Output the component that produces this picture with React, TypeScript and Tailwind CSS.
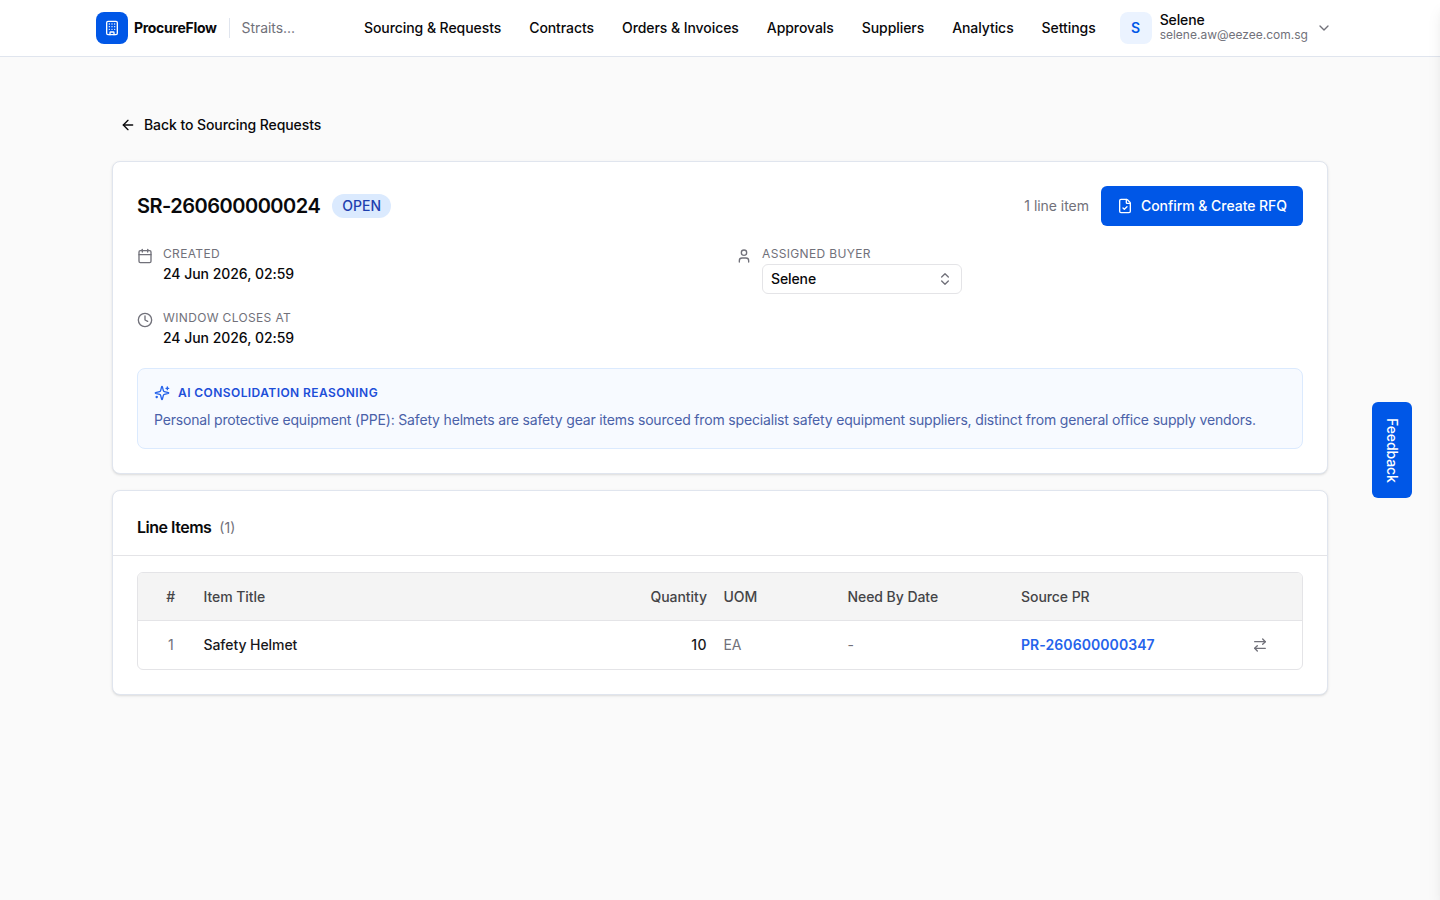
import {
  ArrowLeft,
  ArrowRightLeft,
  Building,
  Calendar,
  ChevronDown,
  ChevronsUpDown,
  Clock,
  FileCheck,
  User,
} from 'lucide-react';

const navItems = [
  'Sourcing & Requests',
  'Contracts',
  'Orders & Invoices',
  'Approvals',
  'Suppliers',
  'Analytics',
  'Settings',
];

const lineItems = [
  { id: 1, title: 'Safety Helmet', quantity: 10, uom: 'EA', needBy: '-', sourcePr: 'PR-260600000347' },
];

function SparklesIcon({ className }: { className?: string }) {
  return (
    <svg
      className={className}
      viewBox="0 0 24 24"
      fill="none"
      stroke="currentColor"
      strokeWidth="2"
      strokeLinecap="round"
      strokeLinejoin="round"
    >
      <path d="M9.937 15.5A2 2 0 0 0 8.5 14.063l-6.135-1.582a.5.5 0 0 1 0-.962L8.5 9.936A2 2 0 0 0 9.937 8.5l1.582-6.135a.5.5 0 0 1 .963 0L14.063 8.5A2 2 0 0 0 15.5 9.937l6.135 1.581a.5.5 0 0 1 0 .964L15.5 14.063a2 2 0 0 0-1.437 1.437l-1.582 6.135a.5.5 0 0 1-.963 0z" />
      <path d="M20 3v4" />
      <path d="M22 5h-4" />
      <path d="M4 17v2" />
      <path d="M5 18H3" />
    </svg>
  );
}

function Header() {
  return (
    <header className="h-[57px] border-b border-[#e0e5ee] bg-white">
      <div className="flex h-14 items-center pl-24">
        <div className="flex w-[268px] items-center">
          <div className="flex h-8 w-8 items-center justify-center rounded-lg bg-[#0057e7]">
            <Building className="h-4 w-4 text-white" />
          </div>
          <span className="ml-1.5 w-[95px] shrink-0 text-sm font-bold tracking-[-0.3px]">ProcureFlow</span>
          <div className="h-5 w-px bg-[#e0e5ee]" />
          <span className="ml-[11.5px] text-sm tracking-[-0.05px] text-[#71717a]">Straits...</span>
        </div>
        <nav className="flex items-center gap-7">
          {navItems.map((item) => (
            <a key={item} href="#" className="text-sm font-medium tracking-[-0.07px] whitespace-nowrap">
              {item}
            </a>
          ))}
        </nav>
        <button className="ml-6 flex items-center text-left">
          <span className="flex h-8 w-8 items-center justify-center rounded-lg bg-[#ebf3ff] text-sm font-semibold text-[#0057e7]">
            S
          </span>
          <span className="ml-2 flex flex-col pb-0.5">
            <span className="text-sm leading-[14px] font-medium tracking-[-0.1px]">Selene</span>
            <span className="text-xs leading-[15px] text-[#71717a]">selene.aw@eezee.com.sg</span>
          </span>
          <ChevronDown className="ml-2 h-4 w-4 text-[#71717a]" />
        </button>
      </div>
    </header>
  );
}

interface FieldProps {
  icon: React.ReactNode;
  label: string;
  children: React.ReactNode;
}

function Field({ icon, label, children }: FieldProps) {
  return (
    <div className="flex items-start gap-2.5">
      <span className="mt-0.5 text-[#71717a]">{icon}</span>
      <div>
        <p className="text-xs tracking-[0.35px] text-[#71717a] uppercase">{label}</p>
        {children}
      </div>
    </div>
  );
}

function RequestCard() {
  return (
    <section className="h-[313px] rounded-lg border border-[#e0e5ee] bg-white p-6 shadow-sm">
      <div className="flex h-10 items-center justify-between">
        <div className="flex items-center gap-3">
          <h1 className="text-xl font-semibold tracking-tight">SR-260600000024</h1>
          <span className="flex h-6 items-center rounded-full bg-[#dbeafe] px-2.5 text-sm font-medium text-[#1e40af]">
            OPEN
          </span>
        </div>
        <div className="flex items-center gap-3">
          <span className="text-sm tracking-[-0.04px] text-[#71717a]">1 line item</span>
          <button className="flex h-10 items-center gap-2 rounded-md bg-[#0057e7] px-4 text-sm font-medium tracking-[-0.05px] text-white">
            <FileCheck className="h-4 w-4" />
            Confirm &amp; Create RFQ
          </button>
        </div>
      </div>

      <div className="mt-5 grid grid-cols-2 gap-x-8 gap-y-4">
        <Field icon={<Calendar className="h-4 w-4" />} label="Created">
          <p className="mt-0.5 text-sm font-medium tracking-[-0.04px]">24 Jun 2026, 02:59</p>
        </Field>
        <Field icon={<User className="h-4 w-4" />} label="Assigned buyer">
          <button className="mt-0.5 flex h-[30px] w-[200px] items-center justify-between rounded-md border border-[#e4e4e7] px-2 text-sm font-medium tracking-[-0.1px]">
            Selene
            <ChevronsUpDown className="h-4 w-4 text-[#71717a]" />
          </button>
        </Field>
        <Field icon={<Clock className="h-4 w-4" />} label="Window closes at">
          <p className="mt-0.5 text-sm font-medium tracking-[-0.04px]">24 Jun 2026, 02:59</p>
        </Field>
      </div>

      <div className="mt-5 h-[81px] rounded-lg border border-[#dbeafe] bg-[#f7faff] p-4">
        <div className="flex items-center gap-2">
          <SparklesIcon className="h-4 w-4 text-[#2563eb]" />
          <span className="text-xs font-semibold tracking-[0.42px] text-[#1d4ed8] uppercase">
            AI Consolidation Reasoning
          </span>
        </div>
        <p className="mt-[7px] text-sm leading-[23px] tracking-[-0.168px] whitespace-nowrap text-[#4a61a8]">
          Personal protective equipment (PPE): Safety helmets are safety gear items sourced from specialist safety
          equipment suppliers, distinct from general office supply vendors.
        </p>
      </div>
    </section>
  );
}

function LineItemsCard() {
  return (
    <section className="mt-4 h-[205px] rounded-lg border border-[#e0e5ee] bg-white shadow-sm">
      <div className="flex h-[65px] items-center border-b border-[#e4e4e7] px-6 pt-2">
        <h2 className="text-base font-semibold tracking-[-0.5px]">Line Items</h2>
        <span className="ml-2 pt-0.5 text-sm text-[#71717a]">(1)</span>
      </div>
      <div className="px-6 pt-4">
        <div className="overflow-hidden rounded-md border border-[#e4e4e7] text-sm tracking-[-0.06px]">
          <div className="grid h-12 grid-cols-[65.5px_382.5px_121px_140.5px_173.5px_1fr] items-center border-b border-[#e4e4e7] bg-[#f4f4f4] font-medium text-[#444447]">
            <span className="text-center">#</span>
            <span>Item Title</span>
            <span className="text-right">Quantity</span>
            <span className="pl-[16.5px]">UOM</span>
            <span>Need By Date</span>
            <span>Source PR</span>
          </div>
          {lineItems.map((item) => (
            <div
              key={item.id}
              className="grid h-12 grid-cols-[65.5px_382.5px_121px_140.5px_173.5px_1fr] items-center"
            >
              <span className="text-center text-[#71717a]">{item.id}</span>
              <span className="font-medium text-[#18181b]">{item.title}</span>
              <span className="text-right font-medium tracking-[0.4px] text-[#18181b]">{item.quantity}</span>
              <span className="pl-[16.5px] text-[#71717a]">{item.uom}</span>
              <span className="text-[#71717a]">{item.needBy}</span>
              <span className="flex items-center justify-between pr-[34px]">
                <a href="#" className="font-semibold tracking-[0.07px] text-[#2563eb]">
                  {item.sourcePr}
                </a>
                <ArrowRightLeft className="h-4 w-4 text-[#71717a]" />
              </span>
            </div>
          ))}
        </div>
      </div>
    </section>
  );
}

export default function App() {
  return (
    <div className="relative h-screen overflow-hidden bg-[#fafafa] font-['Inter',sans-serif] text-[#09090b] antialiased">
      <Header />
      <main className="px-28 pt-[50px]">
        <a href="#" className="flex h-9 items-center gap-2 pl-2 text-sm font-medium tracking-[-0.08px]">
          <ArrowLeft className="h-4 w-4" />
          Back to Sourcing Requests
        </a>
        <div className="mt-[18px]">
          <RequestCard />
          <LineItemsCard />
        </div>
      </main>

      <button className="absolute top-[402px] right-7 flex h-24 w-10 items-center justify-center rounded-md bg-[#0057e7] text-sm font-medium tracking-[-0.1px] text-white [writing-mode:vertical-rl]">
        Feedback
      </button>
      {/* closed side sheet, only its shadow reaches the viewport */}
      <div className="absolute inset-y-0 left-full w-96 bg-white shadow-lg" />
    </div>
  );
}
